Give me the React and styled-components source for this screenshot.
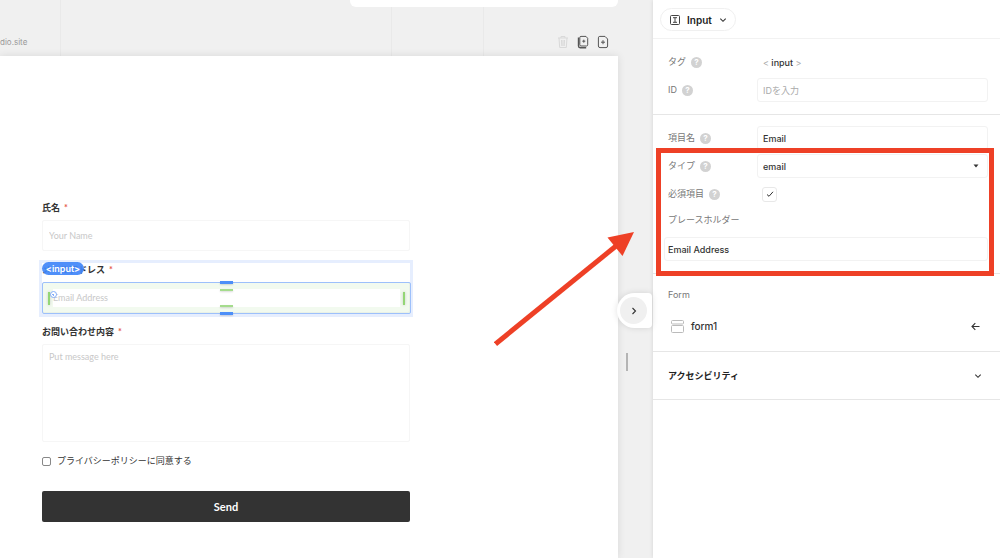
import React from "react"
import styled, { createGlobalStyle } from "styled-components"

const GlobalStyle = createGlobalStyle`
  * {
    box-sizing: border-box;
  }

  body {
    margin: 0;
    background: #f0f0f0;
    color: #333;
    font-family: Inter, "Noto Sans CJK JP", sans-serif;
    font-size: 10px;
  }

  button, input, select, textarea {
    margin: 0;
    font: inherit;
    color: inherit;
  }

  button {
    padding: 0;
    border: 0;
    background: none;
  }
`

const Page = styled.div`
  display: grid;
  grid-template-columns: minmax(0, 1fr) 347px;
  min-height: 100vh;
  overflow: hidden;
  position: relative;
`

/* Canvas side */

const Workspace = styled.main`
  display: flex;
  flex-direction: column;
  position: relative;
`

const Ruler = styled.header`
  display: grid;
  grid-template-columns: 61px 331px 92px 1fr;
  height: 56px;
  padding-right: 44px;
`

const RulerCell = styled.div`
  display: flex;
  align-items: flex-end;
  padding-bottom: 7px;
  justify-content: ${props => (props.$end ? "flex-end" : "flex-start")};
  border-right: ${props => (props.$end ? "0" : "1px solid #e9e9e9")};
  gap: 8px;
`

const SiteName = styled.span`
  color: #999;
  font-size: 8px;
  line-height: 14px;
`

const FloatingBar = styled.div`
  position: absolute;
  top: 0;
  left: 350px;
  right: 35px;
  height: 7px;
  background: #fff;
  border-radius: 0 0 6px 6px;
`

const ToolButton = styled.button`
  display: flex;
  height: 14px;
  color: ${props => (props.disabled ? "#d9d9d9" : "#555")};
`

const Stage = styled.div`
  flex: 1;
  display: grid;
  grid-template-columns: minmax(0, 1fr) 35px;
`

const Artboard = styled.section`
  background: #fff;
  box-shadow: 0 0 8px rgba(0, 0, 0, 0.1);
`

const Gutter = styled.div`
  display: flex;
  flex-direction: column;
  padding-top: 237px;
  gap: 25px;
  z-index: 1;
`

const CollapseTab = styled.button`
  display: flex;
  align-items: center;
  justify-content: center;
  width: 35px;
  height: 35px;
  margin-left: -1px;
  padding-right: 2px;
  background: #fff;
  border-radius: 18px 4px 4px 18px;
  box-shadow: 0 0 6px rgba(0, 0, 0, 0.12);

  span {
    display: flex;
    align-items: center;
    justify-content: center;
    width: 27px;
    height: 27px;
    border-radius: 50%;
    background: #f0f0f0;
  }
`

const ResizeHandle = styled.div`
  width: 2px;
  height: 18px;
  margin-left: 8px;
  background: #b4b4b4;
`

/* Contact form on the artboard */

const Form = styled.form`
  display: flex;
  flex-direction: column;
  gap: 11px;
  margin: 144px 208px 36px 42px;
  font-family: Lato, "Noto Sans CJK JP", sans-serif;
`

const Field = styled.div`
  display: flex;
  flex-direction: column;
  gap: 5px;
  position: relative;
`

const FieldLabel = styled.label`
  font-size: 9px;
  font-weight: 700;
  line-height: 15px;

  i {
    margin-left: 4px;
    color: #e5574d;
    font-style: normal;
  }
`

const TextField = styled.input`
  width: 100%;
  height: 31px;
  padding: 0 6px;
  border: 1px solid #f6f6f6;
  border-radius: 2px;
  background: #fff;
  outline: 0;
  font-size: 9px;
  padding-left: ${props => (props.$selected ? "10px" : "6px")};

  &::placeholder {
    color: #c8c8c8;
    opacity: 1;
  }
`

const MessageField = styled(TextField)`
  display: block;
  height: 98px;
  padding-top: 5px;
  line-height: 14px;
  resize: none;
`

const Consent = styled.label`
  display: flex;
  align-items: center;
  gap: 6px;
  margin-top: 1px;
  font-size: 9px;
  line-height: 14px;

  input {
    appearance: none;
    width: 9px;
    height: 9px;
    border: 1px solid #888;
    border-radius: 2px;
  }
`

const SendButton = styled.button`
  height: 31px;
  margin-top: 12px;
  border-radius: 2px;
  background: #333;
  color: #fff;
  font-size: 11px;
  font-weight: 700;
`

/* Selection marks drawn over the selected field */

const ParentOutline = styled.div`
  position: absolute;
  inset: -2px -3px -4px;
  border: 3px solid #e6eefe;
  border-bottom-width: 4px;
  pointer-events: none;
`

const Selection = styled.div`
  position: absolute;
  inset: 20px -1px -1px 0;
  border: 1px solid #9dc0fb;
  border-radius: 2px;
  pointer-events: none;
`

const PaddingArea = styled.div`
  position: absolute;
  inset: 0;
  border: solid rgba(150, 210, 120, 0.12);
  border-width: 6px 10px;
`

const Grip = styled.div`
  position: absolute;
  left: calc(50% - 7px);
  width: 13px;
  height: ${props => (props.$margin ? "3px" : "2px")};
  background: ${props => (props.$margin ? "#4d8ff8" : "#a5dc8d")};
  box-shadow: 0 1px 2px rgba(0, 0, 0, 0.15);
  ${props => props.$edge}: ${props => (props.$margin ? "-2px" : "6px")};
`

const SideGrip = styled.div`
  position: absolute;
  top: 9px;
  width: 2px;
  height: 13px;
  background: #93d675;
  box-shadow: 0 0 3px rgba(0, 0, 0, 0.2);
  ${props => props.$edge}: 5px;
`

const Origin = styled.div`
  position: absolute;
  top: 8px;
  left: 7px;
  width: 7px;
  height: 7px;
  border: 1px solid #83aefa;
  border-radius: 50%;
  background: radial-gradient(#83aefa 1px, #fff 1px);
`

const TagBadge = styled.span`
  position: absolute;
  top: 0;
  left: 0;
  width: 42px;
  border-radius: 7px;
  background: rgba(64, 134, 248, 0.92);
  color: #fff;
  font-family: Inter, sans-serif;
  font-size: 9px;
  font-weight: 600;
  line-height: 13px;
  text-align: center;
`

/* Inspector */

const Inspector = styled.aside`
  background: #fff;
  box-shadow: 0 0 4px rgba(0, 0, 0, 0.12);
`

const InspectorHeader = styled.header`
  display: flex;
  padding: 8px 7px 7px;
  border-bottom: 1px solid #f2f2f2;
`

const ElementButton = styled.button`
  display: flex;
  align-items: center;
  gap: 7px;
  height: 23px;
  padding: 0 8px 0 9px;
  border: 1px solid #f0f0f0;
  border-radius: 12px;
  font-size: 10px;
  font-weight: 600;
  color: #222;
`

const Section = styled.section`
  display: flex;
  flex-direction: column;
  gap: 4px;
  position: relative;
  padding: 11px 12px 12px 15px;
  border-bottom: 1px solid #e6e6e6;
`

const Row = styled.div`
  display: grid;
  grid-template-columns: 89px minmax(0, 1fr);
  align-items: center;
  height: 24px;
`

const RowLabel = styled.div`
  display: flex;
  align-items: center;
  gap: 5px;
  color: #777;
  font-size: 9px;
  line-height: 14px;
`

const HelpButton = styled.button`
  width: 11px;
  height: 11px;
  border-radius: 50%;
  background: #d2d2d2;
  color: #fff;
  font-size: 8px;
  font-weight: 700;
  line-height: 11px;
`

const TagValue = styled.code`
  padding-left: 6px;
  font: inherit;
  font-size: 9px;
  font-weight: 500;

  span {
    color: #aaa;
    font-weight: 400;
  }
`

const PropInput = styled.input`
  width: 100%;
  height: 24px;
  padding: 0 5px;
  border: 1px solid #f2f2f2;
  border-radius: 3px;
  font-size: 9px;
  font-weight: 500;
  outline: 0;

  &::placeholder {
    color: #aaa;
    font-weight: 400;
    opacity: 1;
  }
`

const WideInput = styled(PropInput)`
  width: auto;
  margin: 6px 0 0 -4px;
  padding-left: 3px;
`

const SelectBox = styled.div`
  display: grid;
  align-items: center;

  select, svg {
    grid-area: 1 / 1;
  }

  select {
    appearance: none;
    width: 100%;
    height: 24px;
    padding: 0 5px;
    border: 1px solid #f2f2f2;
    border-radius: 3px;
    background: #fff;
    font-size: 9px;
    font-weight: 500;
  }

  svg {
    justify-self: end;
    margin-right: 9px;
    pointer-events: none;
  }
`

const CheckBox = styled.span`
  display: grid;
  place-items: center;
  width: 15px;
  height: 15px;
  margin-left: 5px;

  input, svg {
    grid-area: 1 / 1;
  }

  input {
    appearance: none;
    width: 15px;
    height: 15px;
    border: 1px solid #e8e8e8;
    border-radius: 3px;
  }

  svg {
    pointer-events: none;
  }
`

const PlaceholderLabel = styled(RowLabel)`
  padding-top: 3px;
`

const Highlight = styled.div`
  position: absolute;
  inset: 33px 6px -3px 3px;
  border: 5px solid #ee4026;
  pointer-events: none;
`

const FormSection = styled(Section)`
  gap: 12px;
  padding: 14px 15px 13px;
`

const FormLink = styled.button`
  display: flex;
  align-items: center;
  gap: 7px;
  height: 24px;
  padding-left: 3px;
  font-size: 10px;
  font-weight: 500;

  svg:last-child {
    margin-left: auto;
    margin-right: 5px;
  }
`

const Accordion = styled.button`
  display: flex;
  align-items: center;
  justify-content: space-between;
  width: 100%;
  height: 48px;
  padding: 0 18px 0 15px;
  border-bottom: 1px solid #e6e6e6;
  font-size: 9px;
  font-weight: 700;
  color: #222;
`

const Arrow = styled.svg`
  position: absolute;
  top: 232px;
  right: 366px;
  z-index: 2;
  pointer-events: none;
`

function Chevron({ right }) {
  return (
    <svg width="8" height="8" viewBox="0 0 8 8" fill="none" stroke="#333" strokeWidth="1.1">
      <path d={right ? "M2.5 1 5.5 4 2.5 7" : "M1.3 2.7 4 5.3 6.7 2.7"} />
    </svg>
  )
}

function TrashIcon() {
  return (
    <svg width="12" height="14" viewBox="0 0 12 14" fill="none" stroke="currentColor">
      <path d="M1 3h10M4 3V1.5h4V3M2 3l.7 9.5h6.6L10 3M4.5 5l.3 6M7.5 5l-.3 6M6 5v6" />
    </svg>
  )
}

function PageIcon({ stacked }) {
  if (stacked) {
    return (
      <svg width="12" height="14" viewBox="0 0 12 14" fill="none" stroke="currentColor">
        <path d="M1.5 2.5V11q0 1.7 1.7 1.7h6" strokeWidth="1.4" />
        <path d="M4 1.4h5l1.7 1.9v6.5q0 1.2-1.2 1.2H4Q2.8 11 2.8 9.8V2.6Q2.8 1.4 4 1.4Z" />
        <path d="M6.8 4.7v3M5.3 6.2h3" />
      </svg>
    )
  }
  return (
    <svg width="12" height="14" viewBox="0 0 12 14" fill="none" stroke="currentColor">
      <path d="M2.8 1.4H8l2.6 2.6v7q0 1.6-1.6 1.6H3q-1.6 0-1.6-1.6V2.8q0-1.4 1.4-1.4Z" />
      <path d="M6 5.2v4M4 7.2h4" />
    </svg>
  )
}

function Label({ htmlFor, help, children }) {
  return (
    <RowLabel>
      <label htmlFor={htmlFor}>{children}</label>
      {help && <HelpButton type="button">?</HelpButton>}
    </RowLabel>
  )
}

function ContactForm() {
  return (
    <Form onSubmit={e => e.preventDefault()}>
      <Field>
        <FieldLabel htmlFor="name">
          氏名<i>*</i>
        </FieldLabel>
        <TextField id="name" placeholder="Your Name" />
      </Field>
      <Field>
        <FieldLabel htmlFor="mail">
          メールアドレス<i>*</i>
        </FieldLabel>
        <TextField id="mail" type="email" placeholder="Email Address" $selected />
        <ParentOutline />
        <Selection>
          <PaddingArea />
          <Grip $edge="top" $margin />
          <Grip $edge="top" />
          <Grip $edge="bottom" />
          <Grip $edge="bottom" $margin />
          <SideGrip $edge="left" />
          <SideGrip $edge="right" />
          <Origin />
        </Selection>
        <TagBadge>&lt;input&gt;</TagBadge>
      </Field>
      <Field>
        <FieldLabel htmlFor="message">
          お問い合わせ内容<i>*</i>
        </FieldLabel>
        <MessageField as="textarea" id="message" placeholder="Put message here" />
      </Field>
      <Consent>
        <input type="checkbox" />
        プライバシーポリシーに同意する
      </Consent>
      <SendButton type="submit">Send</SendButton>
    </Form>
  )
}

function InspectorPanel() {
  return (
    <Inspector>
      <InspectorHeader>
        <ElementButton>
          <svg width="10" height="10" viewBox="0 0 10 10" fill="none" stroke="#444">
            <rect x=".5" y=".5" width="9" height="9" rx="1" />
            <path d="M3 2.7h4M3 7.3h4M5 2.7v4.6" />
          </svg>
          Input
          <Chevron />
        </ElementButton>
      </InspectorHeader>

      <Section>
        <Row>
          <Label help>タグ</Label>
          <TagValue>
            <span>&lt;</span> input <span>&gt;</span>
          </TagValue>
        </Row>
        <Row>
          <Label htmlFor="prop-id" help>ID</Label>
          <PropInput id="prop-id" placeholder="IDを入力" />
        </Row>
      </Section>

      <Section>
        <Row>
          <Label htmlFor="prop-name" help>項目名</Label>
          <PropInput id="prop-name" defaultValue="Email" />
        </Row>
        <Row>
          <Label htmlFor="prop-type" help>タイプ</Label>
          <SelectBox>
            <select id="prop-type" defaultValue="email">
              <option>text</option>
              <option>email</option>
            </select>
            <svg width="6" height="4" viewBox="0 0 6 4">
              <path d="M.5.5h5L3 3.5Z" fill="#333" />
            </svg>
          </SelectBox>
        </Row>
        <Row>
          <Label htmlFor="prop-required" help>必須項目</Label>
          <CheckBox>
            <input id="prop-required" type="checkbox" defaultChecked />
            <svg width="8" height="8" viewBox="0 0 8 8" fill="none" stroke="#333">
              <path d="M1 4.5 3 6.3 7 1.8" />
            </svg>
          </CheckBox>
        </Row>
        <PlaceholderLabel>
          <label htmlFor="prop-placeholder">プレースホルダー</label>
        </PlaceholderLabel>
        <WideInput id="prop-placeholder" defaultValue="Email Address" />
        <Highlight />
      </Section>

      <FormSection>
        <RowLabel>Form</RowLabel>
        <FormLink>
          <svg width="13" height="13" viewBox="0 0 13 13" fill="none" stroke="#bbb">
            <rect x=".5" y=".5" width="12" height="3.5" rx="1" />
            <rect x=".5" y="5.5" width="12" height="7" rx="1" />
          </svg>
          form1
          <svg width="9" height="9" viewBox="0 0 9 9" fill="none" stroke="#333" strokeWidth="1.1">
            <path d="M8.5 4.5H1M4.3 1.2 1 4.5 4.3 7.8" />
          </svg>
        </FormLink>
      </FormSection>

      <Accordion>
        アクセシビリティ
        <Chevron />
      </Accordion>
    </Inspector>
  )
}

export default function App() {
  return (
    <Page>
      <GlobalStyle />
      <Workspace>
        <Ruler>
          <RulerCell>
            <SiteName>dio.site</SiteName>
          </RulerCell>
          <RulerCell />
          <RulerCell />
          <RulerCell $end>
            <ToolButton disabled aria-label="削除">
              <TrashIcon />
            </ToolButton>
            <ToolButton aria-label="複製">
              <PageIcon stacked />
            </ToolButton>
            <ToolButton aria-label="追加">
              <PageIcon />
            </ToolButton>
          </RulerCell>
        </Ruler>
        <FloatingBar />
        <Stage>
          <Artboard>
            <ContactForm />
          </Artboard>
          <Gutter>
            <CollapseTab aria-label="閉じる">
              <span>
                <Chevron right />
              </span>
            </CollapseTab>
            <ResizeHandle />
          </Gutter>
        </Stage>
      </Workspace>
      <InspectorPanel />
      <Arrow width="140" height="116" viewBox="0 0 140 116">
        <path d="M1.5 112 122 14" stroke="#ee4026" strokeWidth="5" />
        <path d="M140 0 113.500 5.500 128.500 24Z" fill="#ee4026" />
      </Arrow>
    </Page>
  )
}
